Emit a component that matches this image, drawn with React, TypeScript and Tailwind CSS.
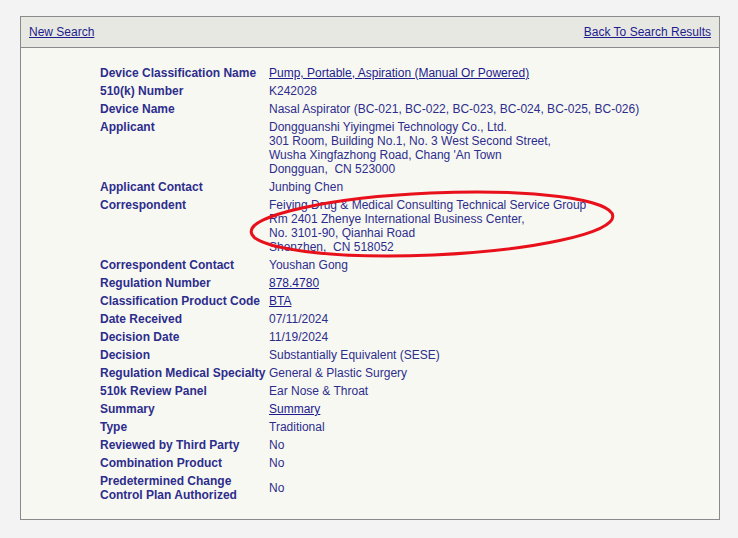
import React from "react";

type Row = { label: React.ReactNode; value: React.ReactNode; center?: boolean };

const L = ({ children }: { children: React.ReactNode }) => (
  <a href="#" className="underline text-[#1c1c8c]">{children}</a>
);

const rows: Row[] = [
  { label: "Device Classification Name", value: <L>Pump, Portable, Aspiration (Manual Or Powered)</L> },
  { label: "510(k) Number", value: "K242028" },
  { label: "Device Name", value: "Nasal Aspirator (BC-021, BC-022, BC-023, BC-024, BC-025, BC-026)" },
  {
    label: "Applicant",
    value: (
      <>
        Dongguanshi Yiyingmei Technology Co., Ltd.<br />
        301 Room, Building No.1, No. 3 West Second Street,<br />
        Wusha Xingfazhong Road, Chang 'An Town<br />
        Dongguan,&nbsp; CN 523000
      </>
    ),
  },
  { label: "Applicant Contact", value: "Junbing Chen" },
  {
    label: "Correspondent",
    value: (
      <>
        Feiying Drug &amp; Medical Consulting Technical Service Group<br />
        Rm 2401 Zhenye International Business Center,<br />
        No. 3101-90, Qianhai Road<br />
        Shenzhen,&nbsp; CN 518052
      </>
    ),
  },
  { label: "Correspondent Contact", value: "Youshan Gong" },
  { label: "Regulation Number", value: <L>878.4780</L> },
  { label: "Classification Product Code", value: <L>BTA</L> },
  { label: "Date Received", value: "07/11/2024" },
  { label: "Decision Date", value: "11/19/2024" },
  { label: "Decision", value: "Substantially Equivalent (SESE)" },
  { label: "Regulation Medical Specialty", value: "General & Plastic Surgery" },
  { label: "510k Review Panel", value: "Ear Nose & Throat" },
  { label: "Summary", value: <L>Summary</L> },
  { label: "Type", value: "Traditional" },
  { label: "Reviewed by Third Party", value: "No" },
  { label: "Combination Product", value: "No" },
  {
    label: (
      <>
        Predetermined Change<br />Control Plan Authorized
      </>
    ),
    value: "No",
    center: true,
  },
];

export default function App() {
  return (
    <div
      className="relative w-[738px] h-[538px] bg-[#f3f3f3] pt-[16px] pl-[20px] text-[12px] leading-[14px] text-[#2d2d8c]"
      style={{ fontFamily: '"Liberation Sans", Arial, sans-serif' }}
    >
      <div className="w-[700px] border border-[#8a8a8a] bg-[#f8f8f3]">
        <div className="flex justify-between items-center h-[31px] px-[8px] bg-[#e8e8e3] border-b border-[#8a8a8a]">
          <L>New Search</L>
          <L>Back To Search Results</L>
        </div>
        <div className="pt-[16px] pb-[15px] pl-[79px]">
          {rows.map((r, i) => (
            <div key={i} className={`flex ${r.center ? "items-center" : "items-start"}`}>
              <div className="w-[169px] shrink-0 py-[2px] font-bold">{r.label}</div>
              <div className="py-[2px]">{r.value}</div>
            </div>
          ))}
        </div>
      </div>
      <svg className="absolute left-0 top-0 pointer-events-none" width="738" height="538">
        <ellipse
          cx="432"
          cy="224"
          rx="181"
          ry="31"
          transform="rotate(-2.5 432 224)"
          fill="none"
          stroke="#e8101a"
          strokeWidth="3"
        />
      </svg>
    </div>
  );
}
